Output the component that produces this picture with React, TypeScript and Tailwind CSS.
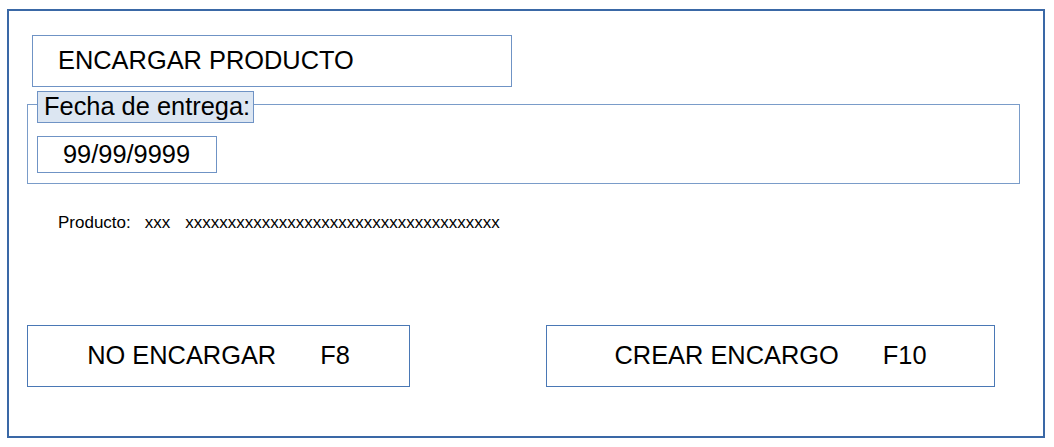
const font = { fontFamily: '"Liberation Sans", Arial, sans-serif' };

const KeyButton = ({ label, fkey, width }: { label: string; fkey: string; width: string }) => (
    <div className={`flex h-[62px] ${width} items-center justify-center border border-[#4a78b5] bg-white text-[25.4px] leading-none text-black`}>
        <span>{label}</span>
        <span className="ml-[44px]">{fkey}</span>
    </div>
);

export default function App() {
    return (
        <div className="h-[447px] w-[1054px] bg-white" style={font}>
            <div className="ml-[7px] pt-[9px]">
                <div className="flex h-[429px] w-[1038px] flex-col border-2 border-[#3a68a6] bg-white">
                    <div className="ml-[23px] mt-[24px] flex h-[52px] w-[480px] items-center border border-[#6f93c5] pl-[25px] text-[25.4px] leading-none text-black">
                        ENCARGAR PRODUCTO
                    </div>

                    <div className="relative ml-[18px] mt-[17px] h-[80px] w-[993px] border border-[#7a9cc9]">
                        <div className="absolute left-[9px] top-[-14px] flex h-[32px] w-[217px] items-center border border-[#6f93c5] bg-[#dce6f2] pl-[6px] text-[25.4px] leading-none text-black">
                            Fecha de entrega:
                        </div>
                        <div className="ml-[9px] mt-[31px] flex h-[37px] w-[180px] items-center border border-[#6f93c5] pl-[25px] text-[25.4px] leading-none text-black">
                            99/99/9999
                        </div>
                    </div>

                    <div className="ml-[49px] mt-[29px] flex text-[17px] leading-[20px] text-black">
                        <span>Producto:</span>
                        <span className="ml-[14px]">xxx</span>
                        <span className="ml-[15px]">xxxxxxxxxxxxxxxxxxxxxxxxxxxxxxxxxxxxx</span>
                    </div>

                    <div className="ml-[18px] mt-[92px] flex">
                        <KeyButton label="NO ENCARGAR" fkey="F8" width="w-[383px]" />
                        <div className="ml-[136px]">
                            <KeyButton label="CREAR ENCARGO" fkey="F10" width="w-[449px]" />
                        </div>
                    </div>
                </div>
            </div>
        </div>
    );
}
